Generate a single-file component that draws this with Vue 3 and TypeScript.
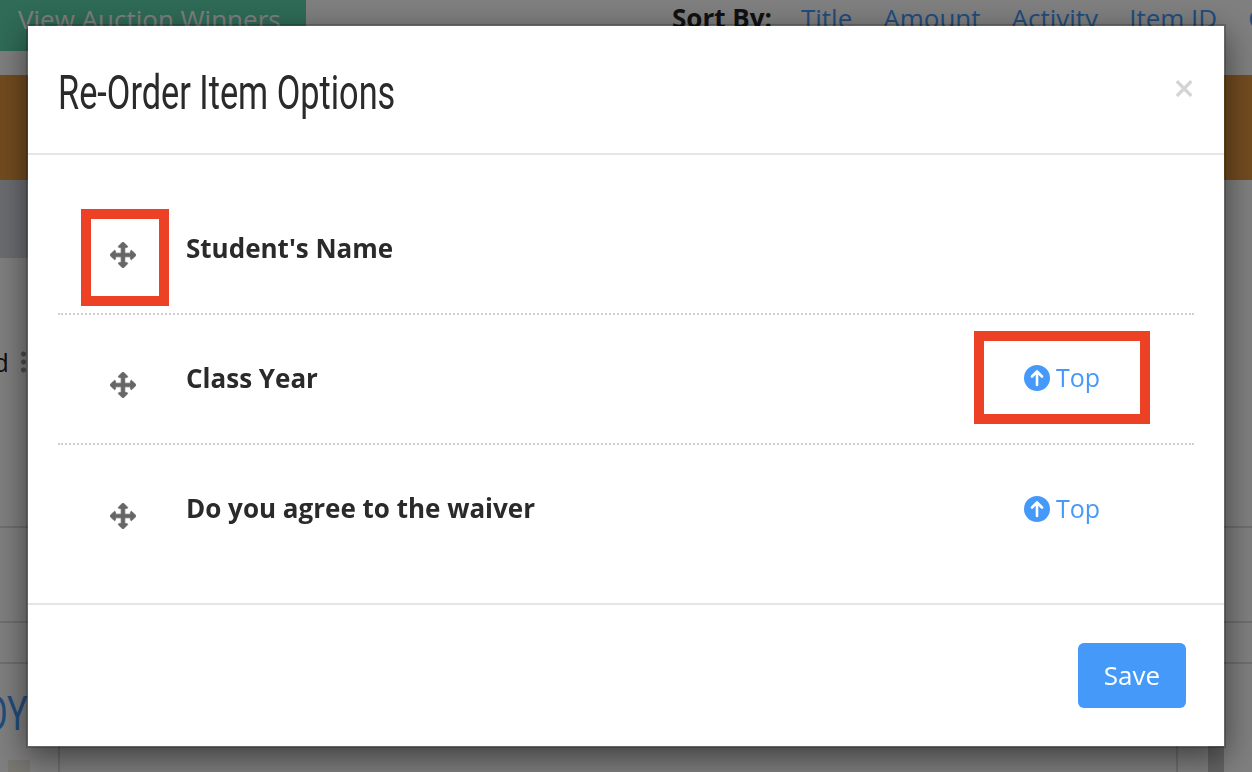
<script setup lang="ts">
interface Row { name: string; showTop: boolean }
const rows: Row[] = [
  { name: "Student's Name", showTop: false },
  { name: 'Class Year', showTop: true },
  { name: 'Do you agree to the waiver', showTop: true },
]
const sorts = ['Title', 'Amount', 'Activity', 'Item ID', 'Current']
</script>

<template>
  <div class="page">
    <header class="topbar">
      <a class="winners">View Auction Winners</a>
      <nav class="sort">
        <b>Sort By:</b>
        <a v-for="s in sorts" :key="s">{{ s }}</a>
      </nav>
    </header>
    <div class="banner"></div>
    <div class="hero"></div>
    <div class="content">
      <div class="handle">d <span class="dots"></span></div>
      <div class="rule one"></div>
      <div class="rule two"></div>
      <div class="rule three"></div>
      <div class="big">OY</div>
    </div>
    <div class="panel">
      <div class="thumb"></div>
      <div class="strip"></div>
    </div>
  </div>

  <div class="backdrop"></div>

  <section class="modal">
    <div class="m-head">
      <h4>Re-Order Item Options</h4>
      <span class="close">×</span>
    </div>
    <div class="m-body">
      <div v-for="r in rows" :key="r.name" class="row">
        <svg class="move" viewBox="0 0 1792 1792"><path fill="#666" stroke="#666" stroke-width="50" d="M1792 896q0 26-19 45l-256 256q-19 19-45 19t-45-19-19-45v-128h-384v384h128q26 0 45 19t19 45-19 45l-256 256q-19 19-45 19t-45-19l-256-256q-19-19-19-45t19-45 45-19h128v-384h-384v128q0 26-19 45t-45 19-45-19l-256-256q-19-19-19-45t19-45l256-256q19-19 45-19t45 19 19 45v128h384v-384h-128q-26 0-45-19t-19-45 19-45l256-256q19-19 45-19t45 19l256 256q19 19 19 45t-19 45-45 19h-128v384h384v-128q0-26 19-45t45-19 45 19l256 256q19 19 19 45z"/></svg>
        <span class="name">{{ r.name }}</span>
        <a v-if="r.showTop" class="top">
          <svg class="up" viewBox="0 0 26 26"><circle cx="13" cy="13" r="13" fill="#4499f9"/><path d="M13 20V7M8 11.500L13 6.500L18 11.500" fill="none" stroke="#fff" stroke-width="2.600" stroke-linecap="round" stroke-linejoin="round"/></svg>
          <span class="top-label">Top</span>
        </a>
      </div>
    </div>
    <div class="m-foot">
      <button class="save">Save</button>
    </div>
  </section>

  <div class="mark mark-move"></div>
  <div class="mark mark-top"></div>
</template>

<style>
html, body { margin: 0; background: #fff; overflow: hidden; }
</style>

<style scoped>
.page { width: 1252px; height: 772px; overflow: hidden; background: #fff; font-family: "Open Sans", sans-serif; display: flex; flex-direction: column; }
.topbar { height: 51px; display: flex; flex-shrink: 0; }
.winners { flex: 0 0 288px; padding-left: 18px; background: #5ed6ae; color: #fff; font-size: 26px; line-height: 38px; white-space: nowrap; }
.sort { margin-left: 366px; display: flex; gap: 31px; font-size: 26px; line-height: 36px; white-space: nowrap; color: #222; }
.sort b { margin-right: -2px; }
.sort a { color: #4499f9; }
.banner { height: 105px; margin-top: 24px; background: #e69840; flex-shrink: 0; }
.hero { height: 78px; width: 1100px; background: #d6dbe2; flex-shrink: 0; }
.content { position: relative; height: 404px; flex-shrink: 0; }
.handle { position: absolute; left: -7px; top: 86px; font-size: 26px; line-height: 36px; color: #222; display: flex; gap: 12px; align-items: center; }
.dots { width: 5px; height: 24px; background: radial-gradient(circle, #999 2.300px, transparent 2.800px) 0 0 / 5px 8px; }
.rule { position: absolute; left: 0; right: 0; height: 2px; background: #ddd; }
.rule.one { top: 268px; }
.rule.two { top: 363px; }
.rule.three { top: 404px; }
.big { position: absolute; left: -16px; top: 426px; font-family: Roboto, sans-serif; font-size: 49px; line-height: 60px; color: #4499f9; transform: scaleX(.7); transform-origin: left center; }
.panel { position: relative; height: 110px; margin: 0 74px 0 58px; border: solid #ddd; border-width: 0 2px; flex-shrink: 0; }
.thumb { position: absolute; left: -52px; top: 98px; width: 22px; height: 12px; background: #f0eee4; }
.strip { position: absolute; left: 1148px; top: 50px; width: 16px; height: 60px; background: #c8c8c8; }

.backdrop { position: fixed; inset: 0; background: rgba(0, 0, 0, .5); }

.modal { position: fixed; left: 26px; top: 24px; width: 1196px; background: #fff; background-clip: padding-box; border: 2px solid rgba(0, 0, 0, .2); box-shadow: 0 10px 30px rgba(0, 0, 0, .5); font-family: "Open Sans", sans-serif; color: #2a2a2a; }
.m-head { height: 127px; padding: 0 29px 0 30px; border-bottom: 2px solid #e5e5e5; display: flex; align-items: center; justify-content: space-between; }
h4 { margin: 6px 0 0; font-family: Roboto, sans-serif; font-weight: 400; font-size: 49px; line-height: 60px; color: #2a2a2a; white-space: nowrap; transform: scaleX(.7); transform-origin: left center; }
.close { font-size: 38px; font-weight: 600; color: #d4d4d4; line-height: 1; margin-top: -6px; }
.m-body { padding: 30px 30px 28px; border-bottom: 2px solid #e5e5e5; }
.row { box-sizing: border-box; height: 130px; padding: 0 94px 0 52px; display: flex; align-items: center; border-bottom: 2px dotted #cfcfcf; }
.row:last-child { border-bottom: 0; }
.move { width: 26px; height: 26px; margin-top: 12px; margin-right: 50px; flex-shrink: 0; }
.name { font-size: 26px; font-weight: 700; color: #2a2a2a; margin-bottom: 3px; }
.row:last-child .name { margin-bottom: 4px; }
.top { margin-left: auto; display: flex; align-items: center; gap: 6px; color: #4499f9; font-size: 25px; margin-bottom: 2px; }
.top-label { margin-bottom: 2px; }
.up { width: 26px; height: 26px; }
.m-foot { height: 141px; padding: 38px 38px 0 0; box-sizing: border-box; display: flex; justify-content: flex-end; align-items: flex-start; }
.save { width: 108px; height: 65px; padding: 0 0 2px; border: 0; border-radius: 6px; background: #4499f9; color: #fff; font: 400 26px "Open Sans", sans-serif; }

.mark { position: fixed; border: 10px solid #ec4125; box-sizing: border-box; }
.mark-move { left: 81px; top: 209px; width: 88px; height: 97px; }
.mark-top { left: 974px; top: 331px; width: 176px; height: 93px; }
</style>
